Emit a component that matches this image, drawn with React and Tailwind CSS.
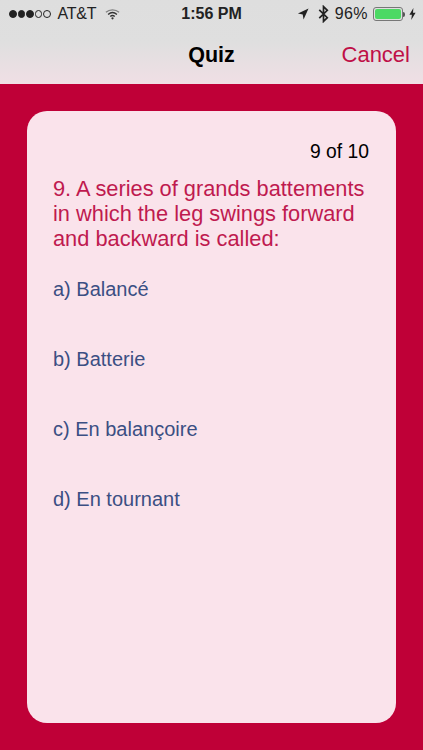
const font = "font-['Liberation_Sans',Arial,sans-serif]";

const Dot = ({ filled }) => (
  <span className={`w-[7.5px] h-[7.5px] rounded-full border border-[#222] ${filled ? 'bg-[#222]' : ''}`} />
);

const Answer = ({ text }) => (
  <div className="h-[70px] text-[20px] leading-[23px] text-[#3b4f83]">{text}</div>
);

export default function App() {
  return (
    <div className={`w-[423px] h-[750px] flex flex-col overflow-hidden bg-[#bf0037] ${font}`}>
      {/* Header */}
      <div className="h-[84px] bg-gradient-to-b from-[#dedede] via-[#dfdfdf] to-[#f0dfe5]">
        <div className="h-[28px] flex items-center justify-between text-[16px] text-[#222] pl-[9px] pr-[7px]">
          <div className="flex items-center w-[150px]">
            <div className="flex gap-[1px]">
              <Dot filled /><Dot filled /><Dot filled /><Dot /><Dot />
            </div>
            <span className="ml-[7px] tracking-[-0.2px]">AT&amp;T</span>
            <svg className="ml-[9px]" width="15" height="12" viewBox="0 0 16 12" fill="none" stroke="#333">
              <path d="M1 4.2C5 .6 11 .6 15 4.2" strokeWidth="1.4" opacity="0.55" />
              <path d="M3.3 6.5c2.8-2.4 6.6-2.4 9.4 0" strokeWidth="1.5" />
              <path d="M5.6 8.6c1.5-1.2 3.3-1.2 4.8 0" strokeWidth="1.5" />
              <circle cx="8" cy="10.6" r="1.2" fill="#333" stroke="none" />
            </svg>
          </div>
          <span className="font-bold ml-[-2px]">1:56 PM</span>
          <div className="flex items-center justify-end w-[150px]">
            <svg width="12" height="12" viewBox="0 0 13 13" fill="#222">
              <path d="M12.5.5 1 6l5.2 1 .9 5.4z" />
            </svg>
            <svg className="ml-[9px]" width="11" height="18" viewBox="0 0 10 17" fill="none" stroke="#222" strokeWidth="1.6">
              <path d="M1 4.6 8.6 12 5 15.5v-14L8.6 5 1 12.4" />
            </svg>
            <span className="ml-[6px] tracking-[0.4px]">96%</span>
            <div className="ml-[5px] w-[30px] h-[14px] rounded-[3px] border border-[#777] p-[1px]">
              <div className="h-full w-full rounded-[2px] bg-[#4cd964]" />
            </div>
            <div className="w-[2px] h-[5px] rounded-r-sm bg-[#555]" />
            <svg className="ml-[4px]" width="7" height="12" viewBox="0 0 7 12" fill="#222">
              <path d="M4.4 0 .4 6.8h2.5L2.2 12l4.4-7.2H4z" />
            </svg>
          </div>
        </div>
        <div className="relative h-[56px] flex items-center justify-center pb-[2px]">
          <span className="text-[21.5px] font-bold text-black">Quiz</span>
          <span className="absolute right-[13px] top-[14px] text-[22px] leading-[26px] text-[#bf0f47]">Cancel</span>
        </div>
      </div>

      {/* Card */}
      <div className="flex-1 pt-[27px] pb-[27px] px-[27px]">
        <div className="h-full rounded-[20px] bg-[#fae3eb] pl-[26px] pr-[27px] pt-[29px]">
          <div className="text-right text-[19.3px] leading-[24px] text-black">9 of 10</div>
          <div className="mt-[12px] text-[21.8px] leading-[25px] text-[#bf1a4f] whitespace-nowrap">
            9. A series of grands battements<br />
            in which the leg swings forward<br />
            and backward is called:
          </div>
          <div className="mt-[27px]">
            <Answer text="a) Balancé" />
            <Answer text="b) Batterie" />
            <Answer text="c) En balançoire" />
            <Answer text="d) En tournant" />
          </div>
        </div>
      </div>
    </div>
  );
}
